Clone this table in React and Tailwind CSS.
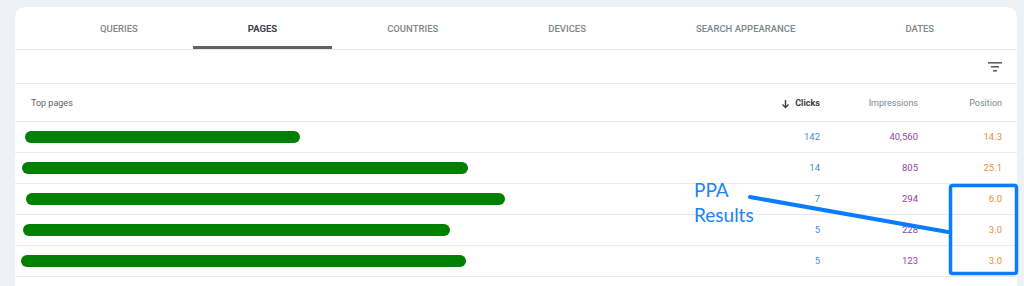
import React from "react";

const tabs = ["Queries", "Pages", "Countries", "Devices", "Search appearance", "Dates"];

const rows = [
  { bar: "ml-[10px] w-[275px]", clicks: "142", impressions: "40,560", position: "14.3" },
  { bar: "ml-[7px] w-[446px]", clicks: "14", impressions: "805", position: "25.1" },
  { bar: "ml-[11px] w-[479px]", clicks: "7", impressions: "294", position: "6.0" },
  { bar: "ml-[8px] w-[427px]", clicks: "5", impressions: "228", position: "3.0" },
  { bar: "ml-[6px] w-[445px]", clicks: "5", impressions: "123", position: "3.0" },
];

const FilterIcon = () => (
  <svg width="16" height="12" viewBox="0 0 16 12" className="text-[#5f6368]">
    <rect x="1" y="1" width="14" height="1.6" fill="currentColor" />
    <rect x="4" y="5" width="8" height="1.6" fill="currentColor" />
    <rect x="6" y="9" width="4" height="1.6" fill="currentColor" />
  </svg>
);

const SortArrow = () => (
  <svg width="9" height="10" viewBox="0 0 9 10" className="text-[#3c4043]">
    <path d="M4.5 1v7.5M1.5 5.5l3 3 3-3" stroke="currentColor" strokeWidth="1.4" fill="none" />
  </svg>
);

export default function App() {
  return (
    <div className="relative h-[286px] w-[1024px] overflow-hidden bg-[#eef1f6] pt-[7px] pl-[15px] font-['Roboto',sans-serif]">
      <div className="h-[290px] w-[1002px] rounded-t-[10px] bg-white">
        {/* tabs */}
        <div className="flex h-[43px] justify-center border-b border-[#e8eaed] pl-[2px]">
          {tabs.map((t) => (
            <div
              key={t}
              className={
                t === "Pages"
                  ? "flex items-center border-b-[3px] border-[#5f6368] px-[55px] pt-[5px] text-[9.5px] font-bold uppercase text-[#3c4043]"
                  : "flex items-center px-[55px] pt-[5px] pb-[3px] text-[9.5px] font-medium uppercase text-[#80868b]"
              }
            >
              {t}
            </div>
          ))}
        </div>

        {/* toolbar */}
        <div className="flex h-[34px] items-center justify-end border-b border-[#e8eaed] pr-[14px]">
          <FilterIcon />
        </div>

        {/* header */}
        <div className="flex h-[38px] items-center border-b border-[#e8eaed] pt-[3px] pr-[15px] text-[9px]">
          <div className="flex-1 pl-[16px] text-[#5f6368]">Top pages</div>
          <div className="flex items-center gap-[5px] font-bold text-[#3c4043]">
            <SortArrow />
            Clicks
          </div>
          <div className="w-[98px] text-right text-[#80868b]">Impressions</div>
          <div className="w-[84px] text-right text-[#80868b]">Position</div>
        </div>

        {/* rows */}
        {rows.map((r, i) => (
          <div key={i} className="flex h-[31px] items-center border-b border-[#e8eaed] pr-[15px] text-[9.5px]">
            <div className="flex-1">
              <div className={"h-[12px] rounded-full bg-[#008000] " + r.bar} />
            </div>
            <div className="pt-[1px] text-right text-[#4a86e8]">{r.clicks}</div>
            <div className="w-[98px] pt-[1px] text-right text-[#8e44ad]">{r.impressions}</div>
            <div className="w-[84px] pt-[1px] text-right text-[#e8903a]">{r.position}</div>
          </div>
        ))}
      </div>

      {/* annotation */}
      <div className="absolute left-[694px] top-[177px] font-['Lato',sans-serif] text-[19px] leading-[25px] text-[#1a84f5]">
        <div>PPA</div>
        <div>Results</div>
      </div>
      <svg className="absolute left-0 top-0" width="1024" height="286">
        <line x1="750" y1="197" x2="948" y2="232" stroke="#0b7cff" strokeWidth="4" strokeLinecap="round" />
        <rect x="950.5" y="185.5" width="66" height="88" rx="2" fill="none" stroke="#0b7cff" strokeWidth="3.5" />
      </svg>
    </div>
  );
}
